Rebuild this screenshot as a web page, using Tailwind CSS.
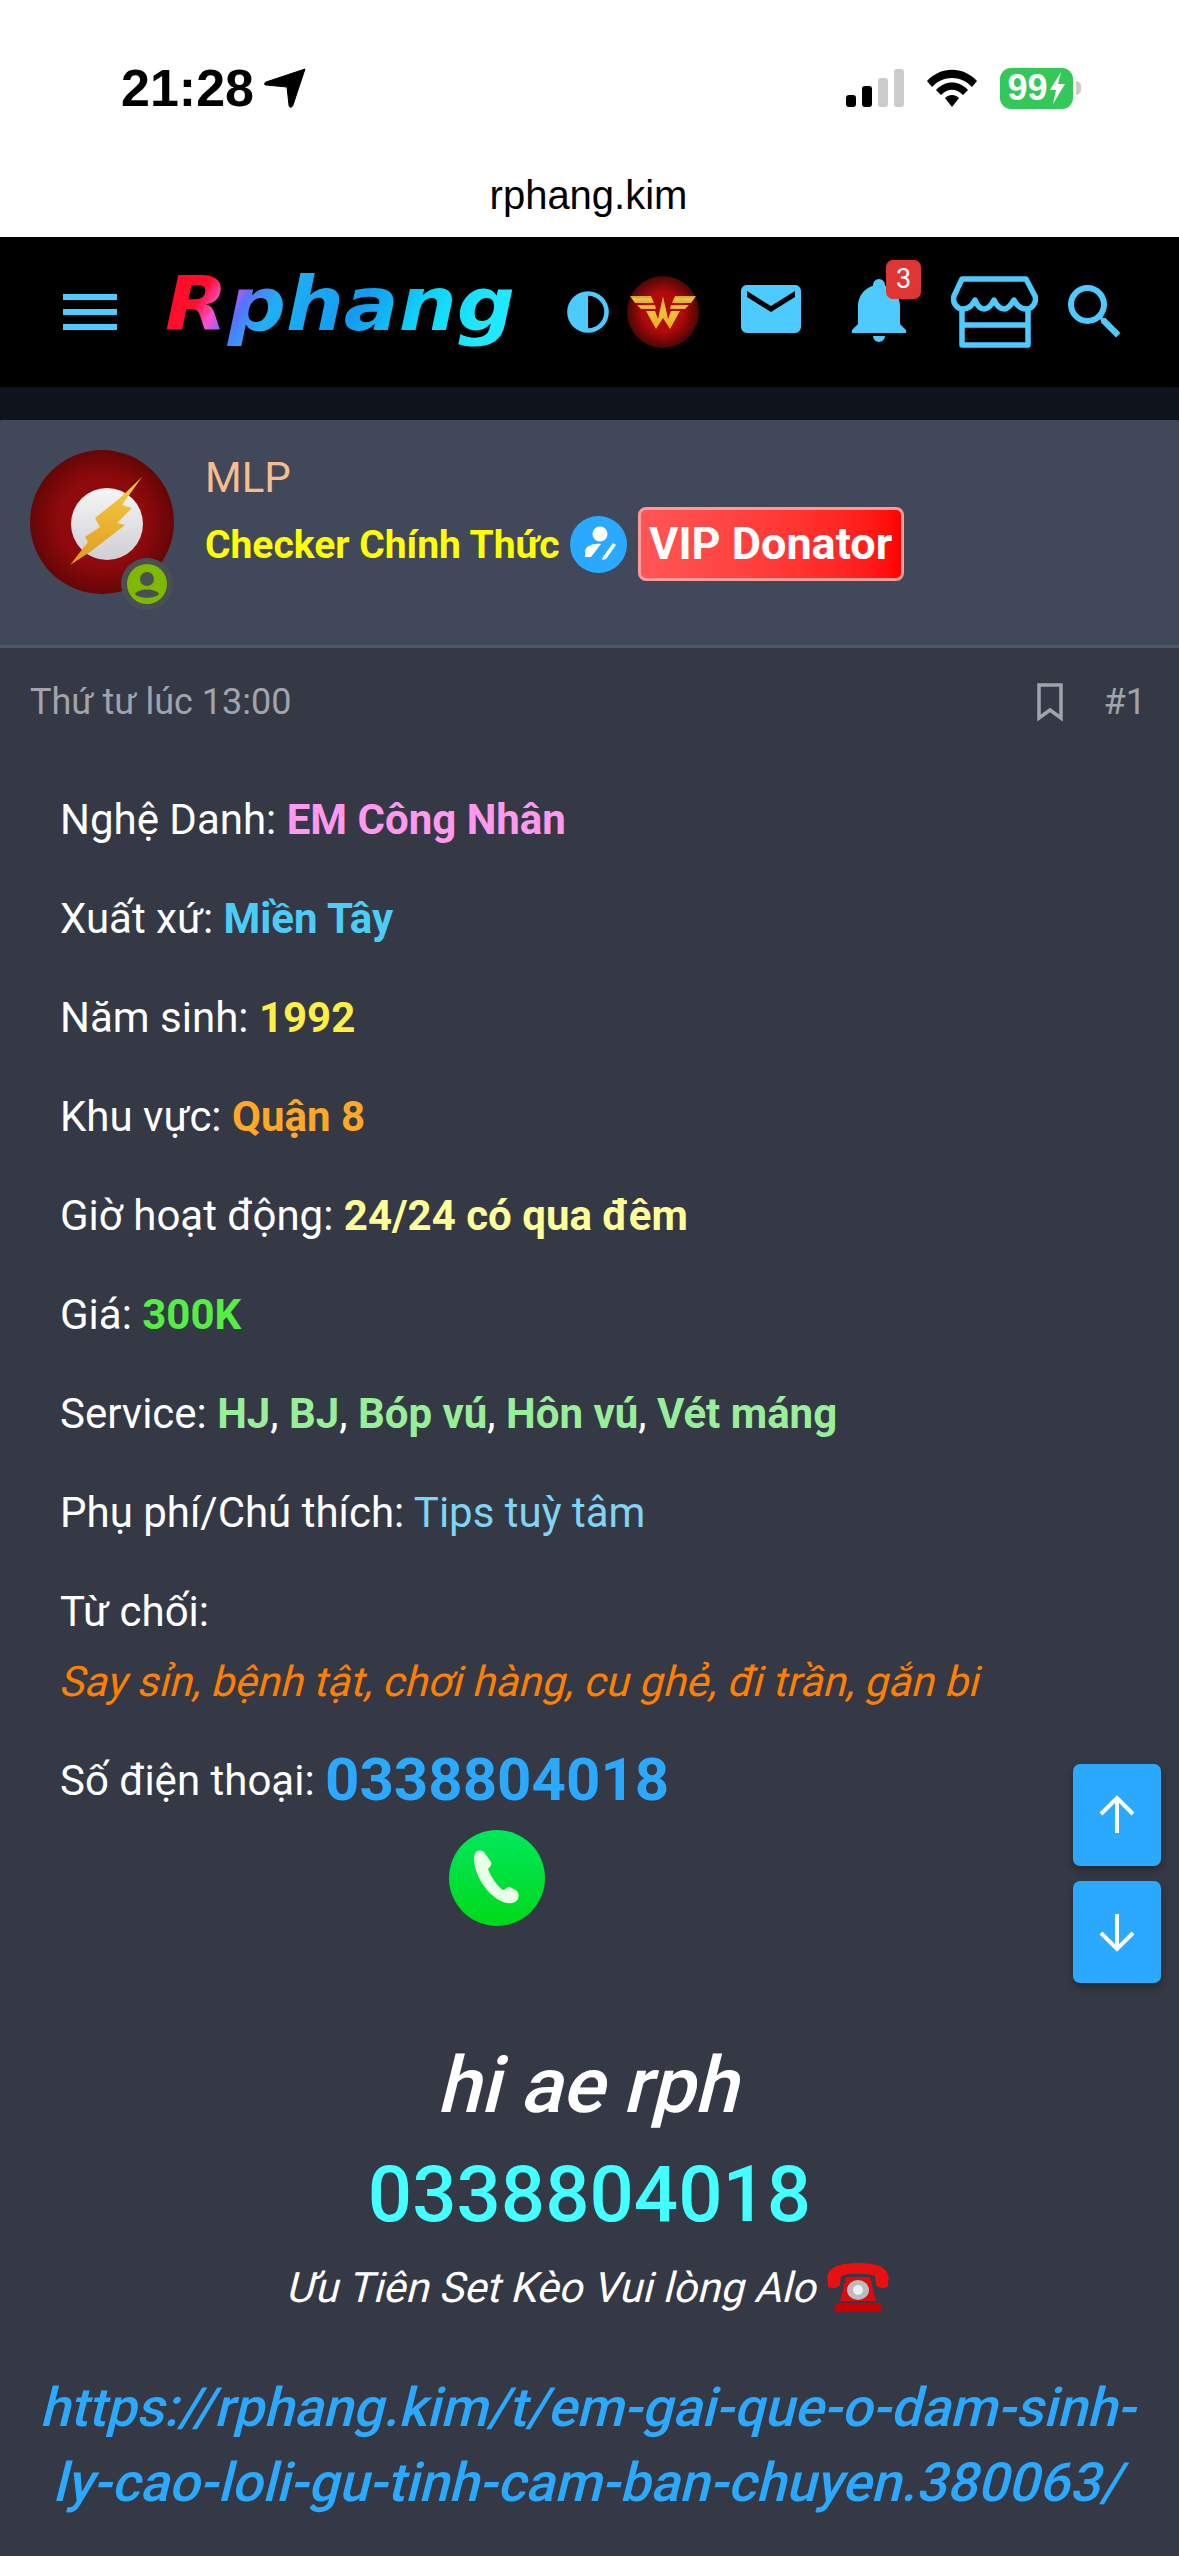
<!DOCTYPE html>
<html lang="vi">
<head>
    <meta charset="UTF-8">
    <meta name="viewport" content="width=device-width, initial-scale=1.0">
    <title>rphang.kim</title>
    <script src="https://cdn.jsdelivr.net/npm/@tailwindcss/browser@4"></script>
</head>
<body class="bg-[#353945] font-['Roboto',sans-serif] text-white">
<div class="relative w-[1179px] h-[2556px] overflow-hidden bg-[#353945]">

    <!-- thanh trạng thái + địa chỉ -->
    <div class="h-[237px] bg-white text-black font-['Liberation_Sans',sans-serif]">
        <div class="flex justify-between items-center h-[40px] translate-y-[68px] pl-[121px] pr-[98px]">
            <div class="flex items-center gap-[10px]">
                <span class="text-[52px] leading-[40px] font-bold">21:28</span>
                <svg class="w-[42px] h-[40px]" viewBox="0 0 42 40"><path d="M41 1 L29 37 C28 40 25 40 25 37 L23 19 L2 17 C0 17 0 15 2 14 Z" fill="#000" stroke="#000" stroke-width="1" stroke-linejoin="round"/></svg>
            </div>
            <div class="flex items-center">
                <svg class="w-[60px] h-[38px]" viewBox="0 0 60 38">
                    <rect x="1" y="26" width="10" height="12" rx="3" fill="#000"/>
                    <rect x="17" y="17" width="10" height="21" rx="3" fill="#000"/>
                    <rect x="33" y="9" width="10" height="29" rx="3" fill="#ccc"/>
                    <rect x="49" y="0" width="10" height="38" rx="3" fill="#ccc"/>
                </svg>
                <svg class="w-[52px] h-[38px] ml-[21px]" viewBox="0 0 52 38">
                    <path d="M1 12 C15 -3 37 -3 51 12 L46 18 C35 6 17 6 6 18 Z" fill="#000"/>
                    <path d="M10 21 C19 11 33 11 42 21 L37 26 C30 19 22 19 15 26 Z" fill="#000"/>
                    <path d="M19 29 C23 25 29 25 33 29 L26 38 Z" fill="#000"/>
                </svg>
                <div class="flex items-center justify-center gap-[1px] w-[73px] h-[41px] ml-[22px] rounded-[11px] bg-[#34c759] text-white text-[36px] font-bold leading-none">
                    <span>99</span>
                    <svg class="w-[17px] h-[32px]" viewBox="0 0 17 32"><path d="M12 0 L1 18 H7 L4 32 L16 12 H9 Z" fill="#fff"/></svg>
                </div>
                <div class="w-[5px] h-[14px] ml-[3px] rounded-r-full bg-[#ccc]"></div>
            </div>
        </div>
        <div class="text-center text-[40px] leading-[46px] pt-[132px] pr-[2px]">rphang.kim</div>
    </div>

    <!-- header -->
    <div class="flex items-center h-[150px] bg-black pl-[54px]">
        <svg class="w-[72px] h-[72px] shrink-0 fill-[#4dcbff]" viewBox="0 0 24 24"><path d="M3 18h18v-2H3v2zm0-5h18v-2H3v2zm0-7v2h18V6H3z"/></svg>
        <svg class="w-[360px] h-[84px] ml-[33px] shrink-0 overflow-visible" viewBox="0 0 360 84">
            <defs>
                <linearGradient id="logoGrad" x1="0" y1="0" x2="1" y2="0.15">
                    <stop offset="0" stop-color="#ff0a1e"/>
                    <stop offset="0.16" stop-color="#ff1030"/>
                    <stop offset="0.22" stop-color="#ff50d0"/>
                    <stop offset="0.29" stop-color="#5a70ff"/>
                    <stop offset="0.38" stop-color="#20b0f5"/>
                    <stop offset="0.62" stop-color="#149bf0"/>
                    <stop offset="0.82" stop-color="#10d8f8"/>
                    <stop offset="1" stop-color="#20e8ff"/>
                </linearGradient>
            </defs>
            <text x="6" y="60" textLength="350" lengthAdjust="spacingAndGlyphs" font-family="DejaVu Sans" font-weight="700" font-style="italic" font-size="74" fill="url(#logoGrad)">Rphang</text>
        </svg>
        <svg class="w-[50px] h-[50px] ml-[44px] shrink-0 fill-[#4dcbff]" viewBox="0 0 24 24"><path d="M12,2A10,10 0 0,0 2,12A10,10 0 0,0 12,22A10,10 0 0,0 22,12A10,10 0 0,0 12,2M12,4.2A7.8,7.8 0 0,1 19.8,12A7.8,7.8 0 0,1 12,19.8V4.2Z"/></svg>
        <svg class="w-[72px] h-[72px] ml-[14px] shrink-0" viewBox="0 0 72 72">
            <defs>
                <radialGradient id="wwBg"><stop offset="0.55" stop-color="#b00a0a"/><stop offset="1" stop-color="#4d0606"/></radialGradient>
                <linearGradient id="wwGold" x1="0" y1="0" x2="0" y2="1"><stop offset="0" stop-color="#c9a24c"/><stop offset="0.5" stop-color="#f0c33c"/><stop offset="1" stop-color="#e8a81e"/></linearGradient>
            </defs>
            <circle cx="36" cy="36" r="36" fill="url(#wwBg)"/>
            <path d="M3 20 H24 L27 27 H8 Z M69 20 H48 L45 27 H64 Z" fill="url(#wwGold)"/>
            <path d="M10 29 H28 L29 33 H14 Z M62 29 H44 L43 33 H58 Z" fill="url(#wwGold)"/>
            <path d="M19 35 H28 L31 43 L36 20 L41 43 L44 35 H53 L43 53 L36 42 L29 53 Z" fill="url(#wwGold)"/>
        </svg>
        <svg class="w-[72px] h-[72px] ml-[36px] -mt-[6px] shrink-0 fill-[#4dcbff]" viewBox="0 0 24 24"><path d="M20,8L12,13L4,8V6L12,11L20,6M20,4H4C2.89,4 2,4.89 2,6V18A2,2 0 0,0 4,20H20A2,2 0 0,0 22,18V6C22,4.89 21.1,4 20,4Z"/></svg>
        <div class="relative w-[72px] h-[72px] ml-[36px] -mt-[6px] shrink-0">
            <svg class="w-[72px] h-[72px] fill-[#4dcbff]" viewBox="0 0 24 24"><path d="M21,19V20H3V19L5,17V11C5,7.9 7.03,5.17 10,4.29C10,4.19 10,4.1 10,4A2,2 0 0,1 12,2A2,2 0 0,1 14,4C14,4.1 14,4.19 14,4.29C16.97,5.17 19,7.9 19,11V17L21,19M14,21A2,2 0 0,1 12,23A2,2 0 0,1 10,21"/></svg>
            <span class="absolute left-[43px] -top-[13px] flex items-center justify-center w-[35px] h-[39px] rounded-[7px] bg-[#e03535] text-white text-[27px] leading-none">3</span>
        </div>
        <svg class="w-[87px] h-[72px] ml-[36px] shrink-0" viewBox="0 0 87 72" fill="none" stroke="#4dcbff" stroke-width="5.5" stroke-linejoin="round">
            <path d="M11 3 H75 L84 20 C86 27 81 33 75 33 C69 33 65 28 63 24 C60 29 56 33 53 33 C49 33 45 28 43 24 C41 28 37 33 33 33 C29 33 26 29 24 24 C22 28 18 33 12 33 C6 33 1 27 3 20 Z"/>
            <path d="M11 34 V69 H77 V34 M11 49 H77"/>
        </svg>
        <svg class="w-[72px] h-[72px] ml-[21px] shrink-0 fill-[#4dcbff]" viewBox="0 0 24 24"><path d="M9.5,3A6.5,6.5 0 0,1 16,9.5C16,11.11 15.41,12.59 14.44,13.73L14.71,14H15.5L20.5,19L19,20.5L14,15.5V14.71L13.73,14.44C12.59,15.41 11.11,16 9.5,16A6.5,6.5 0 0,1 3,9.5A6.5,6.5 0 0,1 9.5,3M9.5,5C7,5 5,7 5,9.5C5,12 7,14 9.5,14C12,14 14,12 14,9.5C14,7 12,5 9.5,5Z"/></svg>
    </div>
    <div class="h-[33px] bg-[#0f131b]"></div>

    <!-- người đăng -->
    <div class="flex h-[228px] bg-[#414859] border-b-[3px] border-[#50576a] rounded-t-[3px] pl-[30px] pt-[30px]">
        <div class="relative w-[144px] h-[144px] shrink-0">
            <svg class="w-[144px] h-[144px]" viewBox="0 0 144 144">
                <defs>
                    <radialGradient id="flashBg"><stop offset="0.6" stop-color="#8f0a0c"/><stop offset="1" stop-color="#650607"/></radialGradient>
                    <linearGradient id="bolt" x1="0" y1="0" x2="0" y2="1"><stop offset="0" stop-color="#f5d04a"/><stop offset="1" stop-color="#e09a1c"/></linearGradient>
                    <linearGradient id="disc" x1="0" y1="0" x2="0" y2="1"><stop offset="0" stop-color="#f6f6f6"/><stop offset="1" stop-color="#cfcfd4"/></linearGradient>
                </defs>
                <circle cx="72" cy="72" r="72" fill="url(#flashBg)"/>
                <circle cx="77" cy="74" r="36" fill="url(#disc)"/>
                <polygon points="112,27 92,55 102,58 87,73 95,75 60,102 40,115 58,92 55,87 70,77 65,68 90,48" fill="url(#bolt)"/>
            </svg>
            <span class="absolute left-[91px] top-[108px] flex items-center justify-center w-[52px] h-[52px] rounded-full bg-[#4a4f55]">
                <svg class="w-[40px] h-[40px]" viewBox="0 0 40 40">
                    <circle cx="20" cy="20" r="20" fill="#7fb800"/>
                    <circle cx="20" cy="15" r="7" fill="#4a4f55"/>
                    <path d="M8 30 C11 24 29 24 32 30 C28 35 12 35 8 30 Z" fill="#4a4f55"/>
                </svg>
            </span>
        </div>
        <div class="ml-[31px]">
            <div class="text-[42px] leading-[48px] text-[#f7bd8a] mt-[4px]">MLP</div>
            <div class="flex items-center mt-[5px]">
                <span class="text-[39px] leading-[74px] font-bold text-[#ffff00] translate-y-[1px]">Checker Chính Thức</span>
                <svg class="w-[57px] h-[57px] ml-[10px] shrink-0" viewBox="0 0 57 57">
                    <circle cx="28.5" cy="28.5" r="28.5" fill="#2aa9ff"/>
                    <circle cx="30" cy="18" r="7.5" fill="#fff"/>
                    <path d="M15 41 V36 C15 30 23 27 31 28 L21 41 Z" fill="#fff"/>
                    <path d="M33 41 L43 27 L46 29 L36 43 L32 44 Z" fill="#fff"/>
                </svg>
                <span class="flex items-center justify-center w-[266px] h-[74px] ml-[11px] rounded-[8px] border-[3px] border-[#ff9a9a] bg-gradient-to-r from-[#ff5555] to-[#ff0000] text-[45px] font-bold text-white">VIP Donator</span>
            </div>
        </div>
    </div>

    <!-- bài viết -->
    <div class="flex justify-between items-center h-[70px] mt-[19px] pl-[30px] pr-[33px] text-[36px] text-[#a0a4ac]">
        <span>Thứ tư lúc 13:00</span>
        <span class="flex items-center">
            <svg class="w-[36px] h-[40px]" viewBox="0 0 36 40" fill="none" stroke="#a0a4ac" stroke-width="3.5"><path d="M7 3 H29 V36 L18 28 L7 36 Z"/></svg>
            <span class="ml-[36px]">#1</span>
        </span>
    </div>

    <div class="pl-[60px] pr-[30px] pt-[48px] text-[42px] leading-[70px]">
        <p class="mb-[29px]">Nghệ Danh: <b class="font-bold text-[#ff99ee]">EM Công Nhân</b></p>
        <p class="mb-[29px]">Xuất xứ: <b class="font-bold text-[#4dcdf5]">Miền Tây</b></p>
        <p class="mb-[29px]">Năm sinh: <b class="font-bold text-[#ffee44]">1992</b></p>
        <p class="mb-[29px]">Khu vực: <b class="font-bold text-[#ffa726]">Quận 8</b></p>
        <p class="mb-[29px]">Giờ hoạt động: <b class="font-bold text-[#ffff99]">24/24 có qua đêm</b></p>
        <p class="mb-[29px]">Giá: <b class="font-bold text-[#55ee44]">300K</b></p>
        <p class="mb-[29px]">Service: <b class="font-bold text-[#99ee99]">HJ</b>, <b class="font-bold text-[#99ee99]">BJ</b>, <b class="font-bold text-[#99ee99]">Bóp vú</b>, <b class="font-bold text-[#99ee99]">Hôn vú</b>, <b class="font-bold text-[#99ee99]">Vét máng</b></p>
        <p class="mb-[29px]">Phụ phí/Chú thích: <span class="text-[#80d4f5]">Tips tuỳ tâm</span></p>
        <p class="mb-[29px]">Từ chối:<br><span class="inline-block ml-[2px] -skew-x-[14deg] text-[#ff8000]">Say sỉn, bệnh tật, chơi hàng, cu ghẻ, đi trần, gắn bi</span></p>
        <p class="h-[70px]">Số điện thoại: <b class="inline-block align-middle -translate-y-[4px] font-bold text-[60px] leading-[70px] text-[#2aa9ff]">0338804018</b></p>
    </div>

    <div class="pl-[449px] pt-[14px]">
        <svg class="w-[96px] h-[96px]" viewBox="0 0 96 96">
            <defs><linearGradient id="callBg" x1="0" y1="0" x2="0" y2="1"><stop offset="0" stop-color="#00e85c"/><stop offset="1" stop-color="#00d818"/></linearGradient></defs>
            <circle cx="48" cy="48" r="48" fill="url(#callBg)"/>
            <path d="M27 22 C23 26 25 42 35 56 C45 70 58 76 66 72 C71 69 70 63 68 61 L61 57 C58 56 57 60 54 60 C49 57 42 47 39 39 C41 37 43 35 42 32 L35 22 C33 20 29 20 27 22 Z" fill="#e8ffe8"/>
        </svg>
    </div>

    <div class="text-center pt-[105px]">
        <div class="text-[78px] leading-[110px] font-medium"><span class="inline-block ml-[8px] -skew-x-[14deg]">hi ae rph</span></div>
        <div class="text-[78px] leading-[107px] font-medium text-[#44ffff]">0338804018</div>
        <div class="flex justify-center items-center h-[64px] mt-[7px] text-[42px]">
            <span class="inline-block -skew-x-[14deg]">Ưu Tiên Set Kèo Vui lòng Alo</span>
            <svg class="w-[64px] h-[49px] ml-[8px]" viewBox="0 0 64 49">
                <path d="M2 20 C-2 4 14 0 32 0 C50 0 66 4 62 20 L62 24 C58 26 52 25 50 22 L49 13 C42 10 22 10 15 13 L14 22 C12 25 6 26 2 24 Z" fill="#e81010"/>
                <path d="M20 14 H44 L50 38 H14 Z" fill="#d80c0c"/>
                <path d="M10 40 H54 L56 49 H8 Z" fill="#cc0000"/>
                <ellipse cx="32" cy="27" rx="11" ry="10" fill="#b9bcc0"/>
                <ellipse cx="32" cy="27" rx="5" ry="5" fill="#eef0f2"/>
            </svg>
        </div>
        <a class="block mt-[51px] pl-[4px] text-[54px] leading-[75px] font-medium text-[#2aa9ff]"><span class="inline-block -skew-x-[14deg]">https://rphang.kim/t/em-gai-que-o-dam-sinh-</span><br><span class="inline-block -skew-x-[14deg]">ly-cao-loli-gu-tinh-cam-ban-chuyen.380063/</span></a>
    </div>

    <!-- nút cuộn -->
    <div class="absolute left-[1073px] top-[1764px] flex flex-col gap-[15px]">
        <span class="flex items-center justify-center w-[88px] h-[102px] rounded-[7px] bg-[#2aa9ff] shadow-[0_4px_8px_rgba(0,0,0,0.3)]">
            <svg class="w-[40px] h-[40px]" viewBox="0 0 40 40" fill="none" stroke="#fff" stroke-width="4"><path d="M20 38 V3 M4 19 L20 3 L36 19"/></svg>
        </span>
        <span class="flex items-center justify-center w-[88px] h-[102px] rounded-[7px] bg-[#2aa9ff] shadow-[0_4px_8px_rgba(0,0,0,0.3)]">
            <svg class="w-[40px] h-[40px]" viewBox="0 0 40 40" fill="none" stroke="#fff" stroke-width="4"><path d="M20 2 V37 M4 21 L20 37 L36 21"/></svg>
        </span>
    </div>
</div>
</body>
</html>
